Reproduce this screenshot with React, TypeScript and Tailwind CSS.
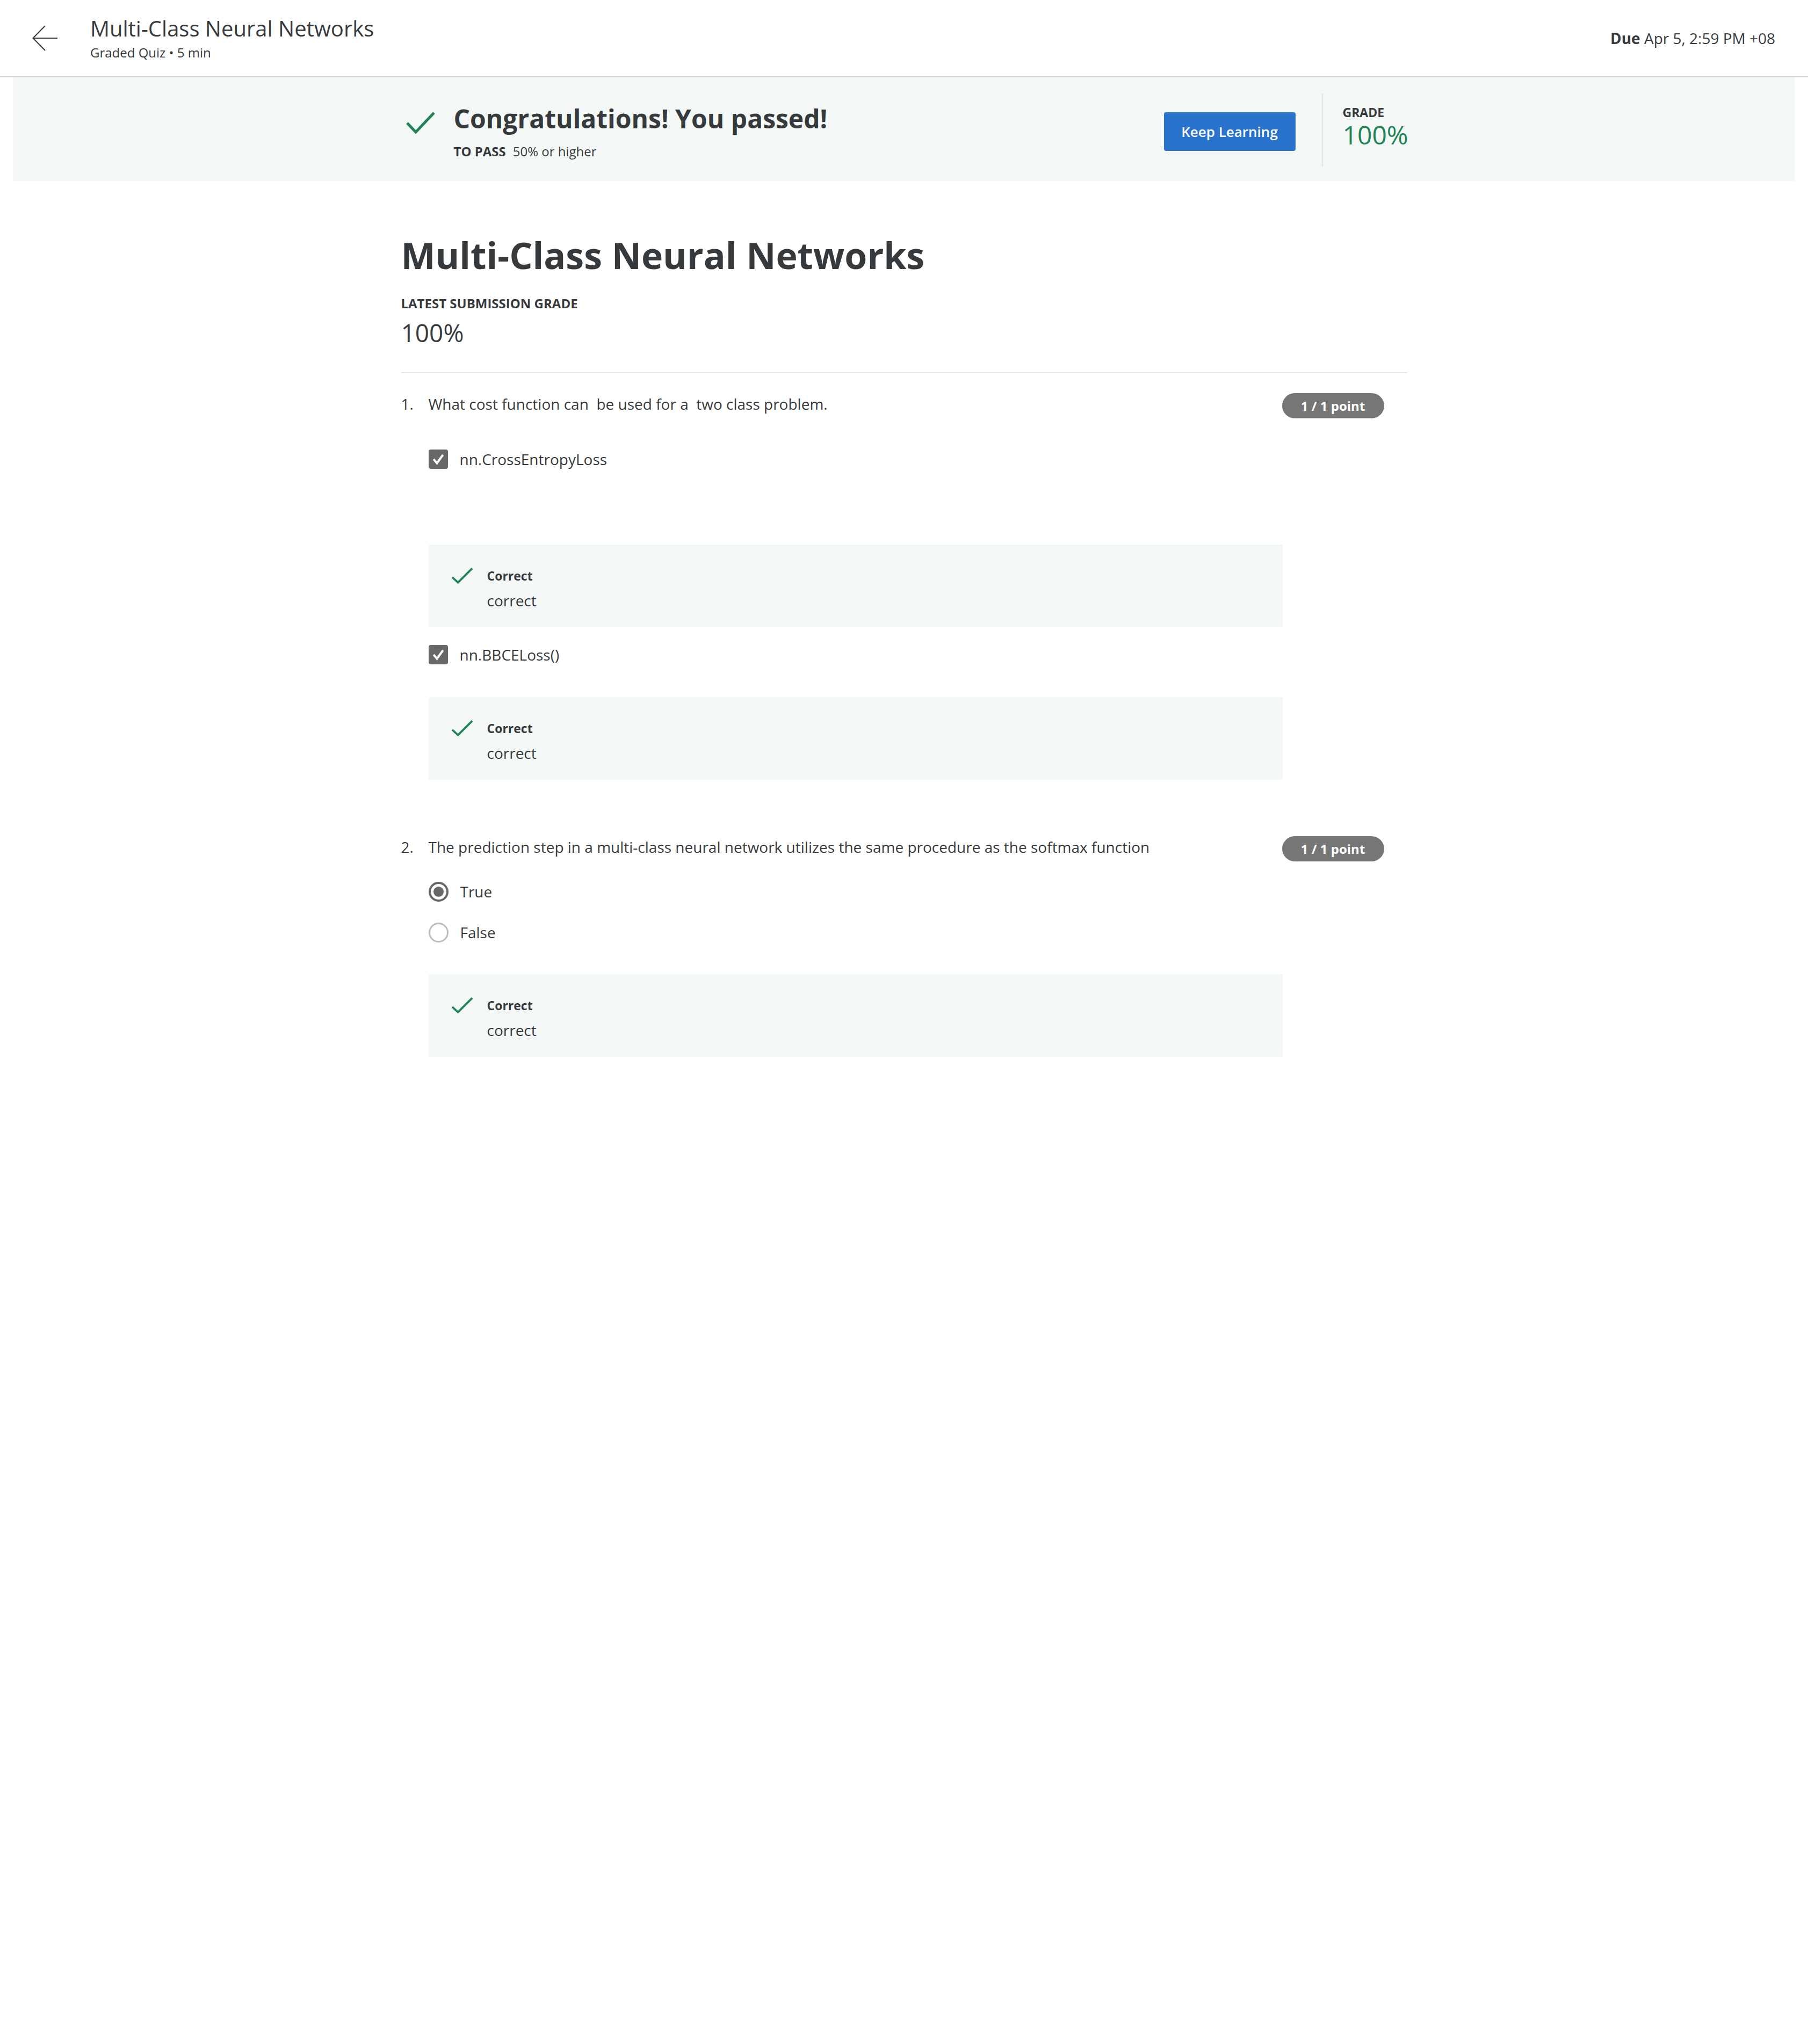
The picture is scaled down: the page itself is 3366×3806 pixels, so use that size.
import React from "react";

const BigCheck = ({ className }: { className?: string }) => (
  <svg className={className} viewBox="0 0 54 42" fill="none">
    <polyline points="2,22 18,39 52,3" stroke="#1f8354" strokeWidth="5" strokeLinecap="butt" strokeLinejoin="miter" />
  </svg>
);

const SmallCheck = ({ className }: { className?: string }) => (
  <svg className={className} viewBox="0 0 42 31" fill="none">
    <polyline points="2,19 13,29 40,2" stroke="#1f8354" strokeWidth="3.8" strokeLinecap="butt" strokeLinejoin="miter" />
  </svg>
);

const CheckBox = () => (
  <div className="flex h-[36px] w-[36px] items-center justify-center rounded-[4px] bg-[#686868]">
    <svg viewBox="0 0 24 24" className="h-[30px] w-[30px]" fill="none">
      <polyline points="5,12 10,18 19,5.5" stroke="#ffffff" strokeWidth="3.2" />
    </svg>
  </div>
);

const Feedback = ({ className }: { className?: string }) => (
  <div className={`w-[1590px] bg-[#f3f8f6] pb-[30px] pl-[42px] pt-[42px] ${className ?? ""}`}>
    <div className="flex h-[31px] items-center">
      <SmallCheck className="h-[31px] w-[41px]" />
      <div className="ml-[26px] text-[23px] font-bold leading-[28px]">Correct</div>
    </div>
    <div className="mt-[11px] pl-[67px] text-[28px] leading-[40px]">correct</div>
  </div>
);

const Badge = () => (
  <div className="mr-[43px] flex h-[47px] w-[190px] shrink-0 items-center justify-center rounded-full bg-[#767676] text-[24px] font-bold text-white">
    1 / 1 point
  </div>
);

export default function App() {
  return (
    <div className="min-h-[3806px] w-full bg-white font-['Open_Sans',sans-serif] text-[#373a3c]">
      <header className="flex h-[144px] items-center justify-between border-b-2 border-[#d2d2d2]">
        <div className="flex items-center">
          <div className="ml-[60px] h-[48px] w-[48px]">
            <svg viewBox="0 0 48 48" className="h-[48px] w-[48px]" fill="none">
              <path d="M24 1 L1.5 24 L24 47 M1.5 24 H47" stroke="#373a3c" strokeWidth="2" />
            </svg>
          </div>
          <div className="ml-[60px] flex flex-col">
            <div className="text-[40px] leading-[48px]">Multi-Class Neural Networks</div>
            <div className="mt-[5px] text-[24px] leading-[32px]">Graded Quiz • 5 min</div>
          </div>
        </div>
        <div className="mr-[61px] text-[28px] leading-[36px]">
          <span className="font-bold">Due</span> Apr 5, 2:59 PM +08
        </div>
      </header>

      <section className="mx-[24px] h-[193px] bg-[#f3f8f6]">
        <div className="mx-auto flex w-[1873px] items-start">
          <div className="flex flex-1 items-start pt-[49px]">
            <BigCheck className="ml-[9px] mt-[14px] h-[42px] w-[54px]" />
            <div className="ml-[35px]">
              <div className="text-[48px] font-bold leading-[56px]">Congratulations! You passed!</div>
              <div className="mt-[19px] text-[24px] leading-[28px]">
                <span className="font-bold">TO PASS</span>
                <span className="ml-[13px]">50% or higher</span>
              </div>
            </div>
          </div>
          <button className="mt-[65px] h-[72px] w-[245px] rounded-[4px] bg-[#2a73cc] text-[26px] font-semibold text-white">
            Keep Learning
          </button>
          <div className="ml-[49px] mt-[30px] h-[136px] w-[2px] bg-[#e1e4e3]" />
          <div className="ml-[37px] mt-[51px] w-[120px]">
            <div className="text-[23px] font-bold leading-[28px]">GRADE</div>
            <div className="text-[48px] font-normal leading-[56px] text-[#1f8354]">100%</div>
          </div>
        </div>
      </section>

      <main className="mx-auto w-[1873px] pt-[98px]">
        <h1 className="text-[68px] font-bold leading-[80px]">Multi-Class Neural Networks</h1>
        <div className="mt-[36px] text-[24px] font-bold leading-[28px]">LATEST SUBMISSION GRADE</div>
        <div className="mt-[12px] text-[46px] font-normal leading-[56px]">100%</div>
        <div className="mt-[46px] h-[2px] bg-[#e5e5e5]" />

        <div className="mt-[37px] flex items-start">
          <div className="w-[51px] text-[28px] leading-[40px]">1.</div>
          <div className="flex-1 text-[28px] leading-[40px]">
            {"What cost function can \u00a0be used for a \u00a0two class problem."}
          </div>
          <Badge />
        </div>

        <div className="ml-[51px]">
          <div className="mt-[56px] flex h-[40px] items-center">
            <CheckBox />
            <div className="ml-[22px] text-[28px] leading-[40px]">nn.CrossEntropyLoss</div>
          </div>
          <Feedback className="mt-[139px]" />
          <div className="mt-[31px] flex h-[40px] items-center">
            <CheckBox />
            <div className="ml-[22px] text-[28px] leading-[40px]">nn.BBCELoss()</div>
          </div>
          <Feedback className="mt-[59px]" />
        </div>

        <div className="mt-[105px] flex items-start">
          <div className="w-[51px] text-[28px] leading-[40px]">2.</div>
          <div className="flex-1 text-[28px] leading-[40px]">
            The prediction step in a multi-class neural network utilizes the same procedure as the softmax function
          </div>
          <Badge />
        </div>

        <div className="ml-[51px]">
          <div className="mt-[36px] flex h-[40px] items-center">
            <div className="flex h-[37px] w-[37px] items-center justify-center rounded-full border-[4px] border-[#686868]">
              <div className="h-[19px] w-[19px] rounded-full bg-[#686868]" />
            </div>
            <div className="ml-[22px] text-[28px] leading-[40px]">True</div>
          </div>
          <div className="mt-[36px] flex h-[40px] items-center">
            <div className="h-[37px] w-[37px] rounded-full border-[3px] border-[#bdbdbd]" />
            <div className="ml-[22px] text-[28px] leading-[40px]">False</div>
          </div>
          <Feedback className="mt-[58px]" />
        </div>
      </main>
    </div>
  );
}
